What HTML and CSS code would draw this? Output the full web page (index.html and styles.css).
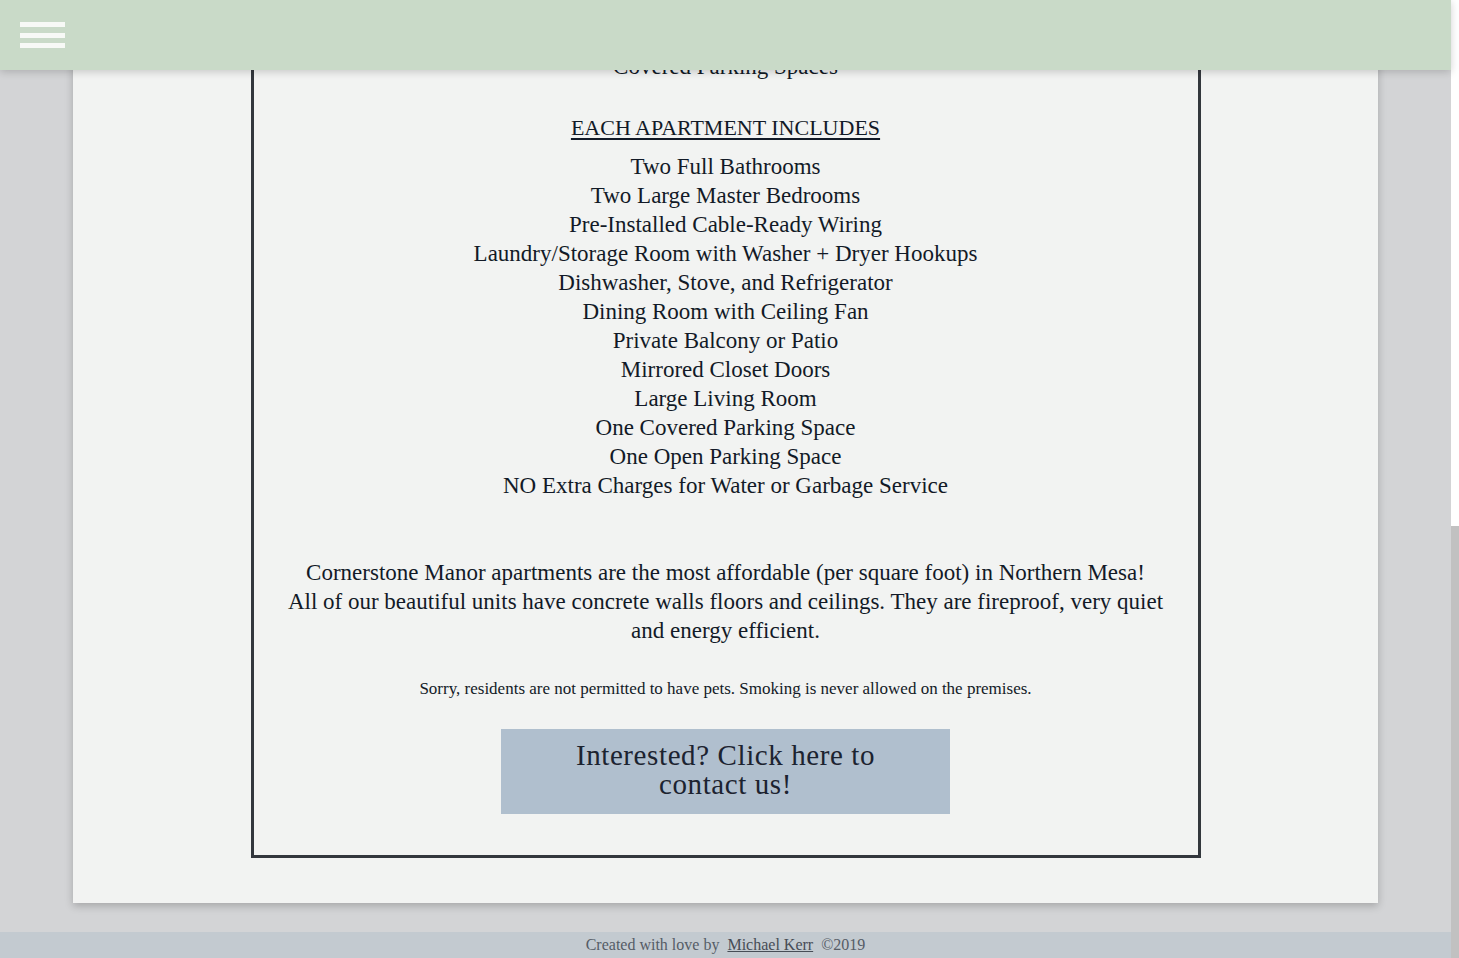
FILE: index.html
```html
<!DOCTYPE html>
<html lang="en">
<head>
<meta charset="utf-8">
<title>Cornerstone Manor</title>
<link rel="stylesheet" href="styles.css">
</head>
<body>
<div class="page">
  <header class="topbar">
    <button class="menu" aria-label="Menu">
      <span class="bar"></span><span class="bar"></span><span class="bar"></span>
    </button>
  </header>
  <main class="stage">
    <section class="card">
      <div class="box">
        <ul class="list prev-list">
          <li>Covered Parking Spaces</li>
        </ul>
        <h2 class="heading">EACH APARTMENT INCLUDES</h2>
        <ul class="list">
          <li>Two Full Bathrooms</li>
          <li>Two Large Master Bedrooms</li>
          <li>Pre-Installed Cable-Ready Wiring</li>
          <li>Laundry/Storage Room with Washer + Dryer Hookups</li>
          <li>Dishwasher, Stove, and Refrigerator</li>
          <li>Dining Room with Ceiling Fan</li>
          <li>Private Balcony or Patio</li>
          <li>Mirrored Closet Doors</li>
          <li>Large Living Room</li>
          <li>One Covered Parking Space</li>
          <li>One Open Parking Space</li>
          <li>NO Extra Charges for Water or Garbage Service</li>
        </ul>
        <p class="about">Cornerstone Manor apartments are the most affordable (per square foot) in Northern Mesa!<br>All of our beautiful units have concrete walls floors and ceilings. They are fireproof, very quiet and energy efficient.</p>
        <p class="note">Sorry, residents are not permitted to have pets. Smoking is never allowed on the premises.</p>
        <a class="cta" href="#contact">Interested? Click here to contact us!</a>
      </div>
    </section>
  </main>
  <footer class="footer">Created with love by&nbsp; <a href="#">Michael Kerr</a>&nbsp; ©2019</footer>
</div>
<div class="scrollbar"><div class="thumb"></div></div>
</body>
</html>
```

FILE: styles.css
```css
html, body {
  margin: 0;
  padding: 0;
  height: 100%;
  overflow: hidden;
  background: #ffffff;
}
body {
  font-family: "Liberation Serif", "Times New Roman", serif;
  color: #121a27;
}
.page {
  width: 1451px;
  height: 958px;
  background: #d3d4d6;
  display: flex;
  flex-direction: column;
}
.topbar {
  position: fixed;
  top: 0;
  left: 0;
  width: 1451px;
  height: 70px;
  background: #c9dac8;
  box-shadow: 0 2px 8px rgba(0, 0, 0, 0.18);
  z-index: 10;
}
.menu {
  position: absolute;
  left: 20px;
  top: 22px;
  width: 45px;
  height: 26px;
  padding: 0;
  border: 0;
  background: transparent;
  display: flex;
  flex-direction: column;
  justify-content: space-between;
}
.bar {
  display: block;
  width: 45px;
  height: 5px;
  background: #f7f9f6;
}
.stage {
  flex: 0 0 auto;
  padding: 0 73px;
}
.card {
  margin-top: -100px;
  background: #f2f3f2;
  box-shadow: 0 3px 8px rgba(0, 0, 0, 0.22);
  padding: 0 0 45px;
  display: flex;
  justify-content: center;
}
.box {
  width: 944px;
  border: 3px solid #33373d;
  padding: 149px 0 41px;
  display: flex;
  flex-direction: column;
  align-items: center;
  text-align: center;
}
.list {
  list-style: none;
  margin: 0;
  padding: 0;
  font-size: 23px;
  line-height: 29px;
}
.heading {
  margin: 32px 0 10px;
  font-size: 22px;
  line-height: 29px;
  font-weight: normal;
  text-decoration: underline;
  text-underline-offset: 3px;
}
.about {
  width: 895px;
  margin: 58px 0 0;
  font-size: 23px;
  line-height: 29px;
}
.note {
  margin: 33px 0 0;
  font-size: 17px;
  line-height: 22px;
}
.cta {
  margin-top: 29px;
  width: 449px;
  height: 85px;
  box-sizing: border-box;
  padding: 12px 40px 0;
  background: #b0bfce;
  color: #1c2330;
  text-decoration: none;
  font-family: "Liberation Serif", serif;
  font-size: 29px;
  line-height: 29px;
  letter-spacing: 0.6px;
}
.footer {
  margin-top: 29px;
  height: 26px;
  background: #c3cad0;
  color: #555c66;
  font-size: 16px;
  line-height: 26px;
  text-align: center;
}
.footer a {
  color: #474d56;
}
.scrollbar {
  position: fixed;
  top: 0;
  right: 0;
  width: 8px;
  height: 958px;
  background: #ffffff;
}
.thumb {
  position: absolute;
  left: 0;
  top: 526px;
  width: 8px;
  height: 432px;
  background: #c1c1c1;
}
```
